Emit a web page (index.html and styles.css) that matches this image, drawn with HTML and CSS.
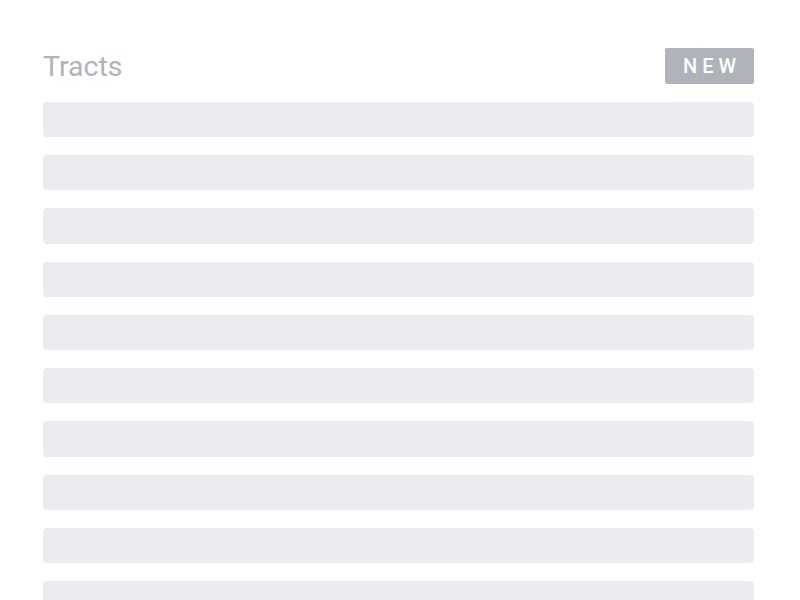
FILE: index.html
```html
<!DOCTYPE html>
<html>
<head>
<meta charset="utf-8">
<link rel="stylesheet" href="styles.css">
</head>
<body>
<div class="page">
  <div class="header">
    <h1 class="title">Tracts</h1>
    <button class="new-btn">NEW</button>
  </div>
  <div class="list">
    <div class="row"></div>
    <div class="row"></div>
    <div class="row"></div>
    <div class="row"></div>
    <div class="row"></div>
    <div class="row"></div>
    <div class="row"></div>
    <div class="row"></div>
    <div class="row"></div>
    <div class="row"></div>
  </div>
</div>
</body>
</html>
```
FILE: styles.css
```css
html, body {
  margin: 0;
  padding: 0;
  background: #ffffff;
  overflow: hidden;
  height: 600px;
}
.page {
  padding: 48px 46px 0 43px;
  font-family: Roboto, "Liberation Sans", sans-serif;
}
.header {
  display: flex;
  justify-content: space-between;
  align-items: center;
  height: 36px;
  margin-bottom: 18px;
}
.title {
  margin: 0;
  font-size: 28.5px;
  font-weight: 400;
  color: #b0b3bb;
  line-height: 36px;
  padding-top: 2px;
}
.new-btn {
  width: 89px;
  height: 36px;
  border: none;
  border-radius: 2px;
  background: #b0b3ba;
  color: #ffffff;
  font-family: Roboto, "Liberation Sans", sans-serif;
  font-size: 20px;
  font-weight: 500;
  letter-spacing: 5px;
  padding: 0 0 0 5px;
  text-align: center;
}
.list {
  display: flex;
  flex-direction: column;
  gap: 18px;
}
.row {
  height: 35.22px;
  background: #ebecf0;
  border-radius: 4px;
}
```
